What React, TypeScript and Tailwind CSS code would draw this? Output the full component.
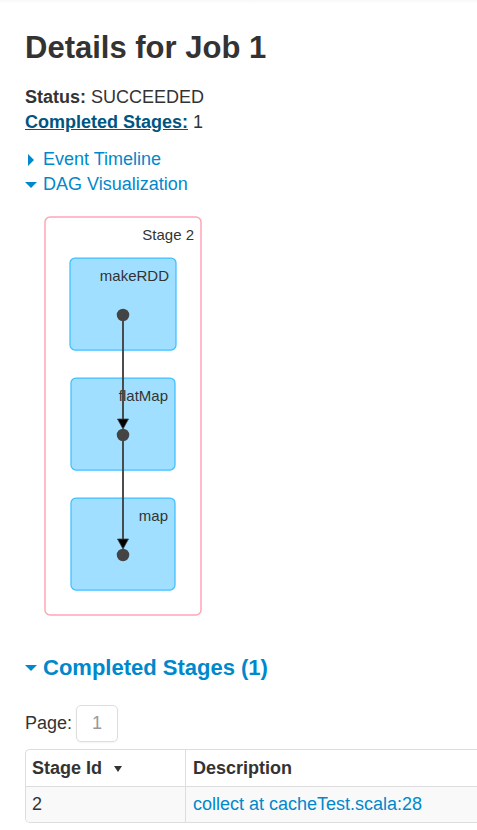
import React, { useState } from "react";

type RddNode = { name: string; x: number; y: number; width: number };

const CENTER_X = 98;

const nodes: RddNode[] = [
  { name: "makeRDD", x: 45, y: 61, width: 106 },
  { name: "flatMap", x: 46, y: 181, width: 104 },
  { name: "map", x: 46, y: 301, width: 104 },
];

function Caret({ open }: { open: boolean }) {
  return (
    <svg className="h-3 w-3 shrink-0 fill-[#0088cc]" viewBox="0 0 12 12" aria-hidden="true">
      {open ? <path d="M0 3h12L6 9z" /> : <path d="M3 0v12l6-6z" />}
    </svg>
  );
}

function Toggle({
  label,
  open,
  onClick,
}: {
  label: string;
  open: boolean;
  onClick: () => void;
}) {
  return (
    <button
      type="button"
      aria-expanded={open}
      onClick={onClick}
      className="flex cursor-pointer items-center gap-1.5 text-[#0088cc]"
    >
      <Caret open={open} />
      {label}
    </button>
  );
}

function DagGraph() {
  return (
    <svg className="block h-[430px] w-[200px]" viewBox="0 0 200 430" role="img" aria-label="Stage 2">
      <rect x="20" y="20" width="156" height="398" rx="5" fill="#fff" stroke="#ffa6b6" strokeWidth="1.5" />
      <text x="169" y="43" textAnchor="end" className="fill-[#333333] text-[15px]">
        Stage 2
      </text>
      {nodes.map((n) => (
        <g key={n.name}>
          <rect x={n.x} y={n.y} width={n.width} height="92" rx="5" fill="#a0dfff" stroke="#3ec0ff" strokeWidth="1.25" />
          <text x={n.x + n.width - 7} y={n.y + 23} textAnchor="end" className="fill-[#333333] text-[15px]">
            {n.name}
          </text>
        </g>
      ))}
      {nodes.map((n) => (
        <circle key={n.name} cx={CENTER_X} cy={n.y + 57} r="6.25" fill="#444" />
      ))}
      {nodes.slice(1).map((n) => (
        <g key={n.name}>
          <path d={`M${CENTER_X} ${n.y - 57}V${n.y + 42}`} stroke="#444" strokeWidth="1.9" />
          <path
            d={`M${CENTER_X - 5.5} ${n.y + 41}h11l-5.5 10z`}
            fill="#000"
            stroke="#444"
            strokeWidth="0.8"
          />
        </g>
      ))}
    </svg>
  );
}

export default function App() {
  const [timeline, setTimeline] = useState(false);
  const [dag, setDag] = useState(true);
  const [stages, setStages] = useState(true);

  return (
    <main className="overflow-hidden bg-linear-to-b from-[#f8f8f8] to-white to-[4px] pb-2 pl-[25px] font-['Liberation_Sans',Arial,sans-serif] text-[18px] leading-[25px] text-[#333333]">
      <h3 className="pt-[23px] text-[31px] leading-[50px] font-bold">Details for Job 1</h3>

      <ul className="mt-3">
        <li>
          <strong>Status:</strong> SUCCEEDED
        </li>
        <li>
          <a href="#completed" className="font-bold text-[#005580] underline">
            Completed Stages:
          </a>{" "}
          1
        </li>
      </ul>

      <div className="mt-3">
        <Toggle label="Event Timeline" open={timeline} onClick={() => setTimeline(!timeline)} />
        <Toggle label="DAG Visualization" open={dag} onClick={() => setDag(!dag)} />
      </div>
      {dag && <DagGraph />}

      <h4 id="completed" className="mt-7 text-[22px] font-bold">
        <Toggle label="Completed Stages (1)" open={stages} onClick={() => setStages(!stages)} />
      </h4>

      {stages && (
        <section>
          <nav className="mt-[25px] flex items-center gap-1" aria-label="Pages">
            <span>Page:</span>
            <button
              type="button"
              disabled
              className="rounded-[5px] border border-[#dddddd] px-[15px] py-[5px] text-[#999999] shadow-xs"
            >
              1
            </button>
          </nav>
          <div className="mt-[7px] rounded-l-[5px] border-y border-l border-[#dddddd]">
            <table className="w-full table-fixed border-separate border-spacing-0 text-left">
              <thead>
                <tr>
                  <th className="w-[159px] px-1.5 pt-1.5 pb-[5px]">
                    <span className="flex items-center gap-3">
                      Stage Id
                      <svg className="h-[6px] w-2 fill-[#333333]" viewBox="0 0 8 6" aria-hidden="true">
                        <path d="M0 0h8L4 6z" />
                      </svg>
                    </span>
                  </th>
                  <th className="border-l border-[#dddddd] px-[7px] pt-1.5 pb-[5px]">Description</th>
                </tr>
              </thead>
              <tbody>
                <tr className="bg-[#f9f9f9]">
                  <td className="rounded-bl-[4px] border-t border-[#dddddd] px-1.5 py-[5px]">2</td>
                  <td className="border-t border-l border-[#dddddd] px-[7px] py-[5px]">
                    <a href="#stage" className="text-[#0088cc]">
                      collect at cacheTest.scala:28
                    </a>
                  </td>
                </tr>
              </tbody>
            </table>
          </div>
        </section>
      )}
    </main>
  );
}
